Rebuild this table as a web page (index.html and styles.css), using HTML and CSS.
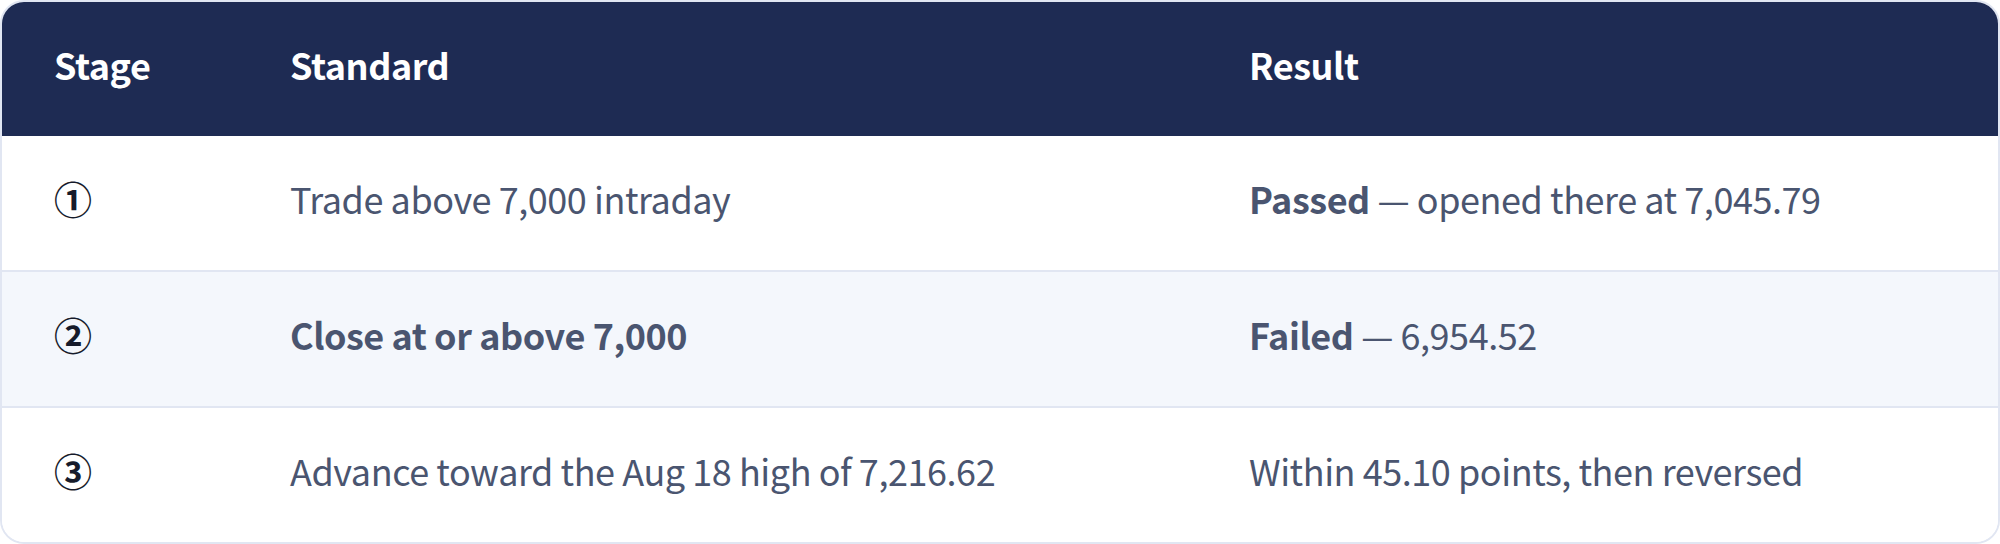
FILE: index.html
```html
<!DOCTYPE html>
<html lang="en">
<head>
<meta charset="utf-8">
<link rel="stylesheet" href="styles.css">
</head>
<body>
<div class="card">
  <table class="stages">
    <colgroup>
      <col class="c-stage">
      <col class="c-standard">
      <col class="c-result">
    </colgroup>
    <thead>
      <tr>
        <th>Stage</th>
        <th>Standard</th>
        <th>Result</th>
      </tr>
    </thead>
    <tbody>
      <tr>
        <td class="num">①</td>
        <td>Trade above 7,000 intraday</td>
        <td><strong>Passed</strong> — opened there at 7,045.79</td>
      </tr>
      <tr class="alt">
        <td class="num">②</td>
        <td><strong>Close at or above 7,000</strong></td>
        <td><strong>Failed</strong> — 6,954.52</td>
      </tr>
      <tr>
        <td class="num">③</td>
        <td>Advance toward the Aug 18 high of 7,216.62</td>
        <td>Within 45.10 points, then reversed</td>
      </tr>
    </tbody>
  </table>
</div>
</body>
</html>
```
FILE: styles.css
```css
html, body {
  margin: 0;
  padding: 0;
  background: #ffffff;
}
body {
  font-family: "Noto Sans CJK KR", "Noto Sans", sans-serif;
}
.card {
  width: 2000px;
  box-sizing: border-box;
  border: 2px solid #e1e6f2;
  border-radius: 24px;
  overflow: hidden;
}
.stages {
  width: 100%;
  border-collapse: collapse;
  table-layout: fixed;
}
.c-stage { width: 236px; }
.c-standard { width: 959px; }
.c-result { width: 801px; }
th, td {
  text-align: left;
  padding: 35px 52px 45px;
  font-size: 36px;
  line-height: 54px;
  letter-spacing: -0.45px;
  white-space: nowrap;
}
th {
  background: #1e2b53;
  color: #ffffff;
  font-weight: 700;
}
td {
  color: #4a5570;
  font-weight: 400;
  border-bottom: 2px solid #e1e6f2;
  background: #ffffff;
}
tbody tr:last-child td {
  border-bottom: none;
}
tr.alt td {
  background: #f4f7fc;
}
td strong {
  font-weight: 700;
}
td.num {
  color: #161b2b;
  font-weight: 700;
  font-size: 38px;
}
```
